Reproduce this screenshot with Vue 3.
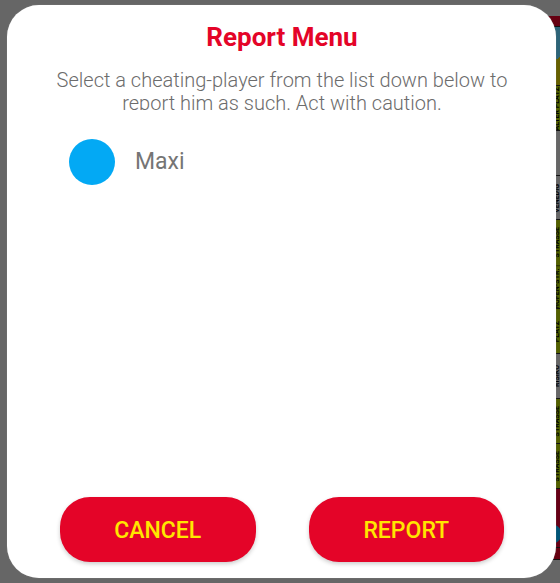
<script setup>
import { ref } from 'vue'

const players = [{ id: 1, name: 'Maxi', color: '#03a9f4' }]
const selected = ref(null)

const fields = [
  { kind: 'edge', size: 10 },
  { kind: 'corner-top', size: 60 },
  { kind: 'olive', size: 45, label: 'ALTER PLATZ' },
  { kind: 'grey', size: 45 },
  { kind: 'grey', size: 44, label: 'VENEDIG' },
  { kind: 'olive joined', size: 45, label: 'STRASSE' },
  { kind: 'olive', size: 45, label: 'HOFEN-STR. |' },
  { kind: 'olive', size: 45, label: 'PLATZ' },
  { kind: 'grey', size: 45, label: 'RISIKO' },
  { kind: 'olive', size: 45, label: 'STRASSE' },
  { kind: 'olive', size: 45, label: 'STRASSE' },
  { kind: 'corner-bottom', size: 59 },
  { kind: 'edge', size: 11 }
]
</script>

<template>
  <main class="scene">
    <div class="board" aria-hidden="true">
      <div
        v-for="(field, i) in fields"
        :key="i"
        class="field"
        :class="field.kind"
        :style="{ flexGrow: field.size }"
      >
        <span v-if="field.label" class="street">{{ field.label }}</span>
      </div>
    </div>

    <section class="dialog" role="dialog" aria-labelledby="title" aria-describedby="hint">
      <h1 id="title">Report Menu</h1>
      <p id="hint" class="hint">
        Select a cheating-player from the list down below to report him as such. Act with caution.
      </p>
      <div class="players">
        <label v-for="player in players" :key="player.id" class="player">
          <input
            v-model="selected"
            type="radio"
            name="player"
            :value="player.id"
            :style="{ backgroundColor: player.color }"
          />
          <span>{{ player.name }}</span>
        </label>
      </div>
      <div class="actions">
        <button type="button">CANCEL</button>
        <button type="button">REPORT</button>
      </div>
    </section>
  </main>
</template>

<style>
body {
  margin: 0;
  background: #666;
}
</style>

<style scoped>
.scene {
  display: grid;
  box-sizing: border-box;
  min-height: 100vh;
  overflow: hidden;
  background: #666;
  font-family: Roboto, "Liberation Sans", sans-serif;
}

.board,
.dialog {
  grid-area: 1 / 1;
}

.board {
  display: flex;
  flex-direction: column;
  justify-self: end;
  width: 60px;
  margin: 16px 0 23px;
}

.field {
  display: flex;
  flex-basis: 0;
  min-height: 0;
  align-items: center;
  justify-content: flex-end;
  box-sizing: border-box;
  border-bottom: 1px solid #111;
  overflow: hidden;
}

.joined {
  border-bottom: 0;
}

.edge {
  background: #660011;
}

.olive {
  background: #536000;
}

.grey {
  background: #666;
}

.corner-top {
  background: linear-gradient(150deg, #2d6478 0 70%, #666000 70%);
}

.corner-bottom {
  background: radial-gradient(circle at 52px 45px, #005577 9px, #660016 10px);
}

.street {
  writing-mode: vertical-rl;
  transform: rotate(180deg);
  color: #000;
  font-size: 7px;
  font-weight: 700;
  line-height: 6px;
  white-space: nowrap;
}

.dialog {
  z-index: 1;
  display: flex;
  flex-direction: column;
  box-sizing: border-box;
  margin: 5px 4px 5px 7px;
  padding: 17px 52px 16px 53px;
  border-radius: 32px;
  background: #fff;
  box-shadow: 0 0 1px #999;
}

h1 {
  margin: 0;
  color: #e40428;
  font-size: 26px;
  font-weight: 700;
  line-height: 30px;
  text-align: center;
}

.hint {
  height: 41px;
  margin: 17px -10px 0;
  overflow: hidden;
  color: #6c6c6c;
  font-size: 20px;
  font-weight: 300;
  line-height: 23px;
  text-align: center;
}

.players {
  flex: 1;
  padding: 28px 9px;
}

.player {
  display: flex;
  align-items: center;
  gap: 20px;
  color: #757575;
  font-size: 23px;
  line-height: 48px;
}

.player input {
  width: 46px;
  height: 46px;
  margin: 0;
  border-radius: 50%;
  appearance: none;
}

.actions {
  display: flex;
  gap: 53px;
}

button {
  flex: 1;
  height: 65px;
  padding: 2px 0 0;
  border: 0;
  border-radius: 30px;
  background: #e40428;
  box-shadow: 0 2px 4px rgb(0 0 0 / 20%);
  color: #ffe600;
  font: 500 23px/28px Roboto, "Liberation Sans", sans-serif;
}
</style>
